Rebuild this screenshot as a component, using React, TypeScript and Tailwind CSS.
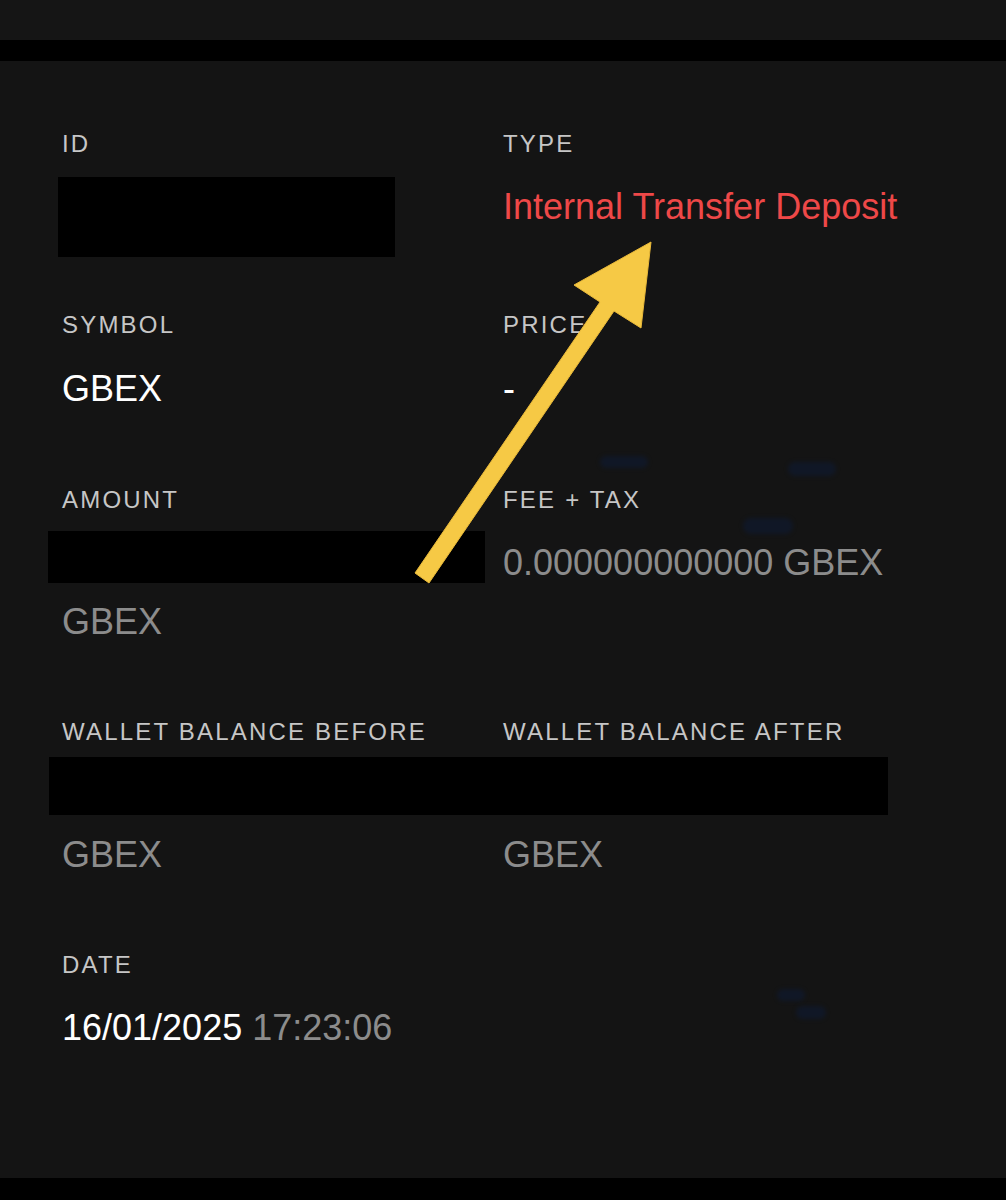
import React from "react";

function Label({ children }: { children: React.ReactNode }) {
  return (
    <div className="text-[24px] leading-[23px] tracking-[2.2px] text-[#c6c6c6] uppercase whitespace-nowrap">
      {children}
    </div>
  );
}

function Value({ children, className = "" }: { children: React.ReactNode; className?: string }) {
  return <div className={`text-[36px] leading-[36px] whitespace-nowrap ${className}`}>{children}</div>;
}

export default function App() {
  return (
    <div className="relative w-full h-[1200px] flex flex-col overflow-hidden font-['Liberation_Sans',Arial,Helvetica,sans-serif]">
      <div className="h-[40px] bg-[#151515]" />
      <div className="h-[21px] bg-black" />
      <div className="flex-1 bg-[#141414] pt-[71px] pl-[62px]">
        {/* ID / TYPE */}
        <div className="grid grid-cols-[441px_1fr]">
          <div>
            <Label>ID</Label>
            <div className="mt-[22px] -ml-[4px] w-[337px] h-[80px] bg-black" />
          </div>
          <div>
            <Label>Type</Label>
            <Value className="mt-[34px] text-[#ee4848]">Internal Transfer Deposit</Value>
          </div>
        </div>

        {/* SYMBOL / PRICE */}
        <div className="grid grid-cols-[441px_1fr] mt-[56px]">
          <div>
            <Label>Symbol</Label>
            <Value className="mt-[35px] text-white">GBEX</Value>
          </div>
          <div>
            <Label>Price</Label>
            <Value className="mt-[35px] text-white">-</Value>
          </div>
        </div>

        {/* AMOUNT / FEE */}
        <div className="grid grid-cols-[441px_1fr] mt-[81px]">
          <div>
            <Label>Amount</Label>
            <div className="mt-[20px] -ml-[14px] w-[437px] h-[52px] bg-black" />
            <Value className="mt-[21px] text-[#8c8c8c]">GBEX</Value>
          </div>
          <div>
            <Label>Fee + Tax</Label>
            <Value className="mt-[34px] text-[#8c8c8c]">0.000000000000 GBEX</Value>
          </div>
        </div>

        {/* WALLET BALANCE */}
        <div className="mt-[80px]">
          <div className="grid grid-cols-[441px_1fr]">
            <Label>Wallet Balance Before</Label>
            <Label>Wallet Balance After</Label>
          </div>
          <div className="mt-[14px] -ml-[13px] w-[839px] h-[58px] bg-black" />
          <div className="grid grid-cols-[441px_1fr] mt-[22px]">
            <Value className="text-[#8c8c8c]">GBEX</Value>
            <Value className="text-[#8c8c8c]">GBEX</Value>
          </div>
        </div>

        {/* DATE */}
        <div className="mt-[80px]">
          <Label>Date</Label>
          <Value className="mt-[34px]">
            <span className="text-white">16/01/2025</span> <span className="text-[#8c8c8c]">17:23:06</span>
          </Value>
        </div>
      </div>
      <div className="h-[22px] bg-black" />

      {/* faint blue smudges */}
      <div className="absolute left-[600px] top-[456px] w-[48px] h-[12px] rounded-full bg-[#0e1a33] blur-[2px] opacity-60" />
      <div className="absolute left-[788px] top-[462px] w-[48px] h-[14px] rounded-full bg-[#0e1a33] blur-[2px] opacity-60" />
      <div className="absolute left-[743px] top-[518px] w-[50px] h-[16px] rounded-full bg-[#0e1a33] blur-[2px] opacity-60" />
      <div className="absolute left-[777px] top-[989px] w-[28px] h-[12px] rounded-full bg-[#0e1a33] blur-[2px] opacity-60" />
      <div className="absolute left-[796px] top-[1006px] w-[30px] h-[13px] rounded-full bg-[#0e1a33] blur-[2px] opacity-60" />

      {/* annotation arrow */}
      <svg
        className="absolute left-0 top-0 pointer-events-none"
        width="1006"
        height="1200"
        viewBox="0 0 1006 1200"
      >
        <polygon
          points="415,573 600,302 574,285 651,242 641,328 614,311 429,583"
          fill="#f6c945"
          stroke="#e9b93a"
          strokeWidth="1"
          strokeLinejoin="miter"
        />
      </svg>
    </div>
  );
}
